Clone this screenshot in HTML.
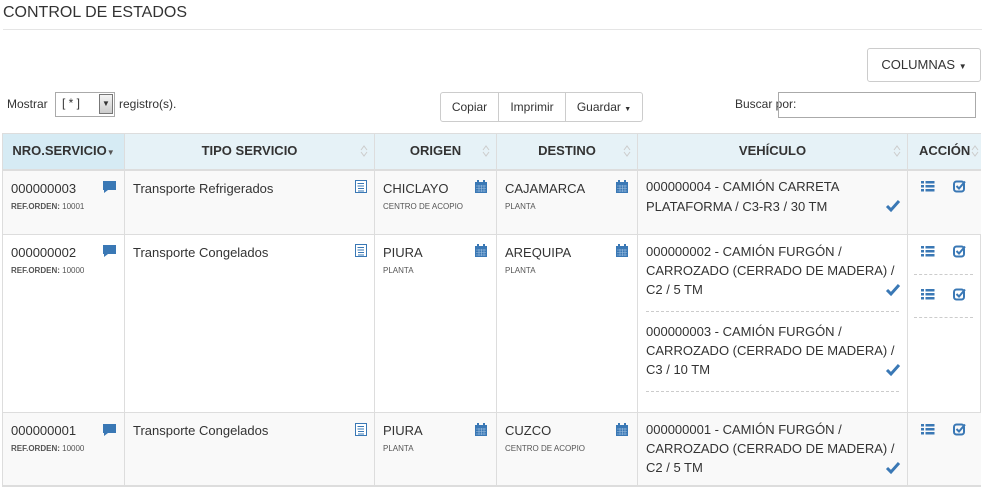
<!DOCTYPE html>
<html><head><meta charset="utf-8"><style>
*{box-sizing:border-box;margin:0;padding:0}
body{width:985px;height:490px;background:#fff;font-family:"Liberation Sans",Arial,sans-serif;font-size:13px;color:#333;position:relative;overflow:hidden}
.a{position:absolute}
.h{position:absolute;top:134px;height:36px;font-weight:bold;font-size:13px;text-align:center;line-height:34px;border-right:1px solid #ddd;background:#e6f2f7}
.srt{position:absolute;right:6px;top:10px;width:8px;height:14px}
.cell{position:absolute;border-right:1px solid #ddd;border-bottom:1px solid #ddd;padding:10px 8px}
.sm{font-size:8px;color:#555;margin-top:6px}
.ic{position:absolute;fill:#3a78b5}
.dash{position:absolute;border-top:1px dashed #ccc}
.btn{position:absolute;border:1px solid #ccc;background:#fff;text-align:center;font-size:12px}
</style></head><body>
<div class="a" style="left:3px;top:4px;font-size:16px;color:#333">CONTROL DE ESTADOS</div>
<div class="a" style="left:3px;top:29px;width:979px;border-top:1px solid #e5e5e5"></div>
<div class="btn" style="left:867px;top:48px;width:114px;height:34px;line-height:32px;font-size:13px;border-radius:3px">COLUMNAS <span style="font-size:8px">▼</span></div>
<div class="a" style="left:7px;top:97px;font-size:12px">Mostrar</div>
<div class="a" style="left:55px;top:92px;width:60px;height:25px;border:1px solid #aaa;background:#fff;font-size:12px;padding:3px 6px">[ * ]</div>
<div class="a" style="left:99px;top:94px;width:14px;height:20px;border:1px solid #777;background:linear-gradient(#f4f4f4,#ccc);font-size:8px;text-align:center;line-height:18px">▼</div>
<div class="a" style="left:119px;top:97px;font-size:12px">registro(s).</div>
<div class="btn" style="left:440px;top:92px;width:59px;height:30px;line-height:28px;border-radius:3px 0 0 3px">Copiar</div>
<div class="btn" style="left:498px;top:92px;width:68px;height:30px;line-height:28px">Imprimir</div>
<div class="btn" style="left:565px;top:92px;width:78px;height:30px;line-height:28px;border-radius:0 3px 3px 0">Guardar <span style="font-size:7px">▼</span></div>
<div class="a" style="left:735px;top:97px;font-size:12px">Buscar por:</div>
<div class="a" style="left:778px;top:92px;width:198px;height:26px;border:1px solid #aaa"></div>

<div class="a" style="left:2px;top:133px;width:979px;height:354px;border:1px solid #ddd"></div>
<div class="h" style="left:3px;width:122px;background:#d6ebf4">NRO.SERVICIO<span style="font-size:8px;color:#555">▼</span></div>
<div class="h" style="left:125px;width:250px">TIPO SERVICIO<svg class="srt" viewBox="0 0 8 14"><path d="M1 6L4 2L7 6M1 8L4 12L7 8" fill="none" stroke="#ccc"/></svg></div>
<div class="h" style="left:375px;width:122px">ORIGEN<svg class="srt" viewBox="0 0 8 14"><path d="M1 6L4 2L7 6M1 8L4 12L7 8" fill="none" stroke="#ccc"/></svg></div>
<div class="h" style="left:497px;width:141px">DESTINO<svg class="srt" viewBox="0 0 8 14"><path d="M1 6L4 2L7 6M1 8L4 12L7 8" fill="none" stroke="#ccc"/></svg></div>
<div class="h" style="left:638px;width:270px">VEHÍCULO<svg class="srt" viewBox="0 0 8 14"><path d="M1 6L4 2L7 6M1 8L4 12L7 8" fill="none" stroke="#ccc"/></svg></div>
<div class="h" style="left:908px;width:73px;border-right:none;text-align:left;padding-left:11px">ACCIÓN<svg class="srt" style="right:2px" viewBox="0 0 8 14"><path d="M1 6L4 2L7 6M1 8L4 12L7 8" fill="none" stroke="#ccc"/></svg></div>
<div class="a" style="left:3px;top:169px;width:978px;border-top:2px solid #ddd"></div>

<!-- rows backgrounds -->
<div class="a" style="left:3px;top:171px;width:978px;height:64px;background:#f9f9f9"></div>
<div class="a" style="left:3px;top:413px;width:978px;height:73px;background:#f9f9f9"></div>

<!-- row 1 -->
<div class="cell" style="left:3px;top:171px;width:122px;height:64px">000000003<div class="sm"><b>REF.ORDEN:</b> 10001</div></div>
<div class="cell" style="left:125px;top:171px;width:250px;height:64px">Transporte Refrigerados</div>
<div class="cell" style="left:375px;top:171px;width:122px;height:64px">CHICLAYO<div class="sm">CENTRO DE ACOPIO</div></div>
<div class="cell" style="left:497px;top:171px;width:141px;height:64px">CAJAMARCA<div class="sm">PLANTA</div></div>
<div class="cell" style="left:638px;top:171px;width:270px;height:64px;line-height:20px;padding-top:6px">000000004 - CAMIÓN CARRETA<br>PLATAFORMA / C3-R3 / 30 TM</div>
<div class="cell" style="left:908px;top:171px;width:73px;height:64px;border-right:none"></div>
<!-- row 2 -->
<div class="cell" style="left:3px;top:235px;width:122px;height:178px">000000002<div class="sm"><b>REF.ORDEN:</b> 10000</div></div>
<div class="cell" style="left:125px;top:235px;width:250px;height:178px">Transporte Congelados</div>
<div class="cell" style="left:375px;top:235px;width:122px;height:178px">PIURA<div class="sm">PLANTA</div></div>
<div class="cell" style="left:497px;top:235px;width:141px;height:178px">AREQUIPA<div class="sm">PLANTA</div></div>
<div class="cell" style="left:638px;top:235px;width:270px;height:178px;line-height:19px;padding-top:7px">000000002 - CAMIÓN FURGÓN /<br>CARROZADO (CERRADO DE MADERA) /<br>C2 / 5 TM<div style="height:23px"></div>000000003 - CAMIÓN FURGÓN /<br>CARROZADO (CERRADO DE MADERA) /<br>C3 / 10 TM</div>
<div class="cell" style="left:908px;top:235px;width:73px;height:178px;border-right:none"></div>
<!-- row 3 -->
<div class="cell" style="left:3px;top:413px;width:122px;height:73px">000000001<div class="sm"><b>REF.ORDEN:</b> 10000</div></div>
<div class="cell" style="left:125px;top:413px;width:250px;height:73px">Transporte Congelados</div>
<div class="cell" style="left:375px;top:413px;width:122px;height:73px">PIURA<div class="sm">PLANTA</div></div>
<div class="cell" style="left:497px;top:413px;width:141px;height:73px">CUZCO<div class="sm">CENTRO DE ACOPIO</div></div>
<div class="cell" style="left:638px;top:413px;width:270px;height:73px;line-height:19px;padding-top:7px">000000001 - CAMIÓN FURGÓN /<br>CARROZADO (CERRADO DE MADERA) /<br>C2 / 5 TM</div>
<div class="cell" style="left:908px;top:413px;width:73px;height:73px;border-right:none"></div>

<div class="dash" style="left:646px;top:311px;width:253px"></div>
<div class="dash" style="left:646px;top:391px;width:253px"></div>
<div class="dash" style="left:914px;top:274px;width:59px"></div>
<div class="dash" style="left:914px;top:317px;width:59px"></div>

<svg class="a" style="left:0;top:0" width="985" height="490">
<defs>
<g id="cm" fill="#3a78b5"><path d="M0 0h13v9H5l-4 3V9H0z"/></g>
<g id="doc"><rect x="0.5" y="0.5" width="11" height="12" fill="#fff" stroke="#3a78b5"/><path d="M3 3.5h6M3 6h6M3 8.5h6M3 11h6" stroke="#3a78b5"/><path d="M2 3.5h0.5M2 6h.5" stroke="#3a78b5"/></g>
<g id="cal" fill="#3a78b5"><rect x="0" y="2" width="12" height="11"/><rect x="2" y="0" width="2" height="3"/><rect x="8" y="0" width="2" height="3"/><path d="M1 6h10M1 8.5h10M1 11h10M4 5v7M6.5 5v7M9 5v7" stroke="#9fc0e0" stroke-width=".6"/></g>
<g id="chk"><path d="M1 7l4 4L13 2" fill="none" stroke="#3a78b5" stroke-width="3"/></g>
<g id="lst" fill="#3a78b5"><rect x="0" y="0" width="3" height="2.5"/><rect x="4.5" y="0" width="9" height="2.5"/><rect x="0" y="4" width="3" height="2.5"/><rect x="4.5" y="4" width="9" height="2.5"/><rect x="0" y="8" width="3" height="2.5"/><rect x="4.5" y="8" width="9" height="2.5"/></g>
<g id="cb"><rect x="1" y="1.5" width="10" height="10" rx="2.5" fill="none" stroke="#3a78b5" stroke-width="2"/><path d="M3.5 6l2.5 2.5L12 1.5" fill="none" stroke="#3a78b5" stroke-width="2"/></g>
</defs>
<use href="#cm" x="103" y="181"/><use href="#cm" x="103" y="245"/><use href="#cm" x="103" y="424"/>
<use href="#doc" x="355" y="180"/><use href="#doc" x="355" y="244"/><use href="#doc" x="355" y="423"/>
<use href="#cal" x="475" y="180"/><use href="#cal" x="475" y="244"/><use href="#cal" x="475" y="423"/>
<use href="#cal" x="616" y="180"/><use href="#cal" x="616" y="244"/><use href="#cal" x="616" y="423"/>
<use href="#chk" x="886" y="199"/><use href="#chk" x="886" y="283"/><use href="#chk" x="886" y="363"/><use href="#chk" x="886" y="461"/>
<use href="#lst" x="921" y="181"/><use href="#cb" x="953" y="180"/>
<use href="#lst" x="921" y="246"/><use href="#cb" x="953" y="245"/>
<use href="#lst" x="921" y="289"/><use href="#cb" x="953" y="288"/>
<use href="#lst" x="921" y="424"/><use href="#cb" x="953" y="423"/>
</svg>
</body></html>
